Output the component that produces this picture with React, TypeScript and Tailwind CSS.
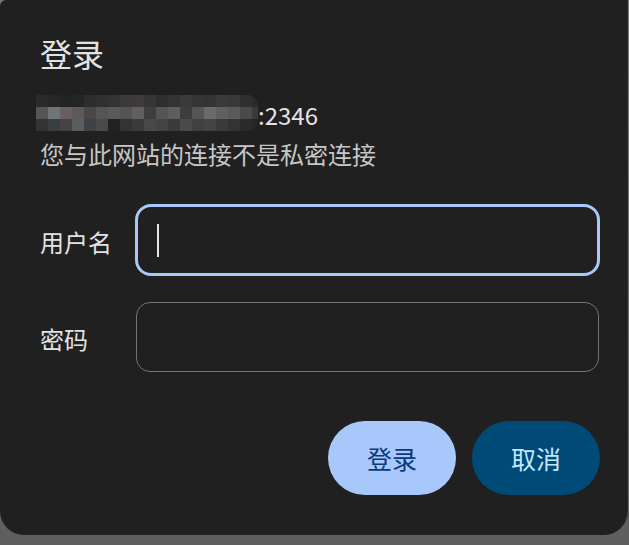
import React from "react";

const rows: string[][] = [
  ["#2a2a2a","#262626","#232323","#252525","#2d2d2d","#303030","#333333","#3a3a3a","#3d3a39","#363636","#2e2e2e","#333333","#3a3a3a","#353535","#333333","#3a3a3a","#383838","#2f2f2f","#2a2a2a"],
  ["#555555","#6f7575","#6a5e5e","#5a5a5a","#4a4746","#555555","#5a5a5a","#545454","#606060","#3e3e3e","#555555","#5e5e5e","#3d3d3d","#555555","#6a6a6a","#606060","#5a5a5a","#4a4a4a","#3a3a3a"],
  ["#333333","#3a3e40","#444444","#5a5e5e","#3e4246","#4a4a4a","#222222","#333333","#3a3a3a","#484848","#444444","#3a3a3a","#4a4a4a","#404040","#444444","#3a3a3a","#333333","#2a2a2a","#262626"],
];

function Mosaic() {
  return (
    <div className="flex flex-col w-[222px] overflow-hidden rounded-r-[10px] shrink-0">
      {rows.map((r, i) => (
        <div key={i} className="flex h-[12px]">
          {r.map((c, j) => (
            <div key={j} className="w-[12px] h-[12px] shrink-0" style={{ backgroundColor: c }} />
          ))}
        </div>
      ))}
    </div>
  );
}

export default function App() {
  const font = { fontFamily: '"Noto Sans CJK SC", "Noto Sans", sans-serif' };
  return (
    <div className="w-[629px] h-[545px] bg-gradient-to-b from-[#787878] to-[#5e5e5e]" style={font}>
      <div className="w-[628px] h-[535px] bg-[#202020] rounded-b-[24px] rounded-tl-[6px] border-r border-[#2c2c2c] pl-[40px] pr-[27px] pt-[37px] flex flex-col">
        <div className="text-[32px] leading-[32px] text-[#e3e3e3]">登录</div>
        <div className="mt-[26px] ml-[-4px] flex items-center h-[36px]">
          <Mosaic />
          <span className="text-[24px] leading-[24px] text-[#e3e3e3] mt-[4px]">:2346</span>
        </div>
        <div className="mt-[11px] text-[24px] leading-[24px] text-[#c7c7c7]">您与此网站的连接不是私密连接</div>
        <div className="mt-[38px] flex items-center">
          <div className="w-[95px] shrink-0 text-[24px] leading-[24px] text-[#e3e3e3] mt-[4px]">用户名</div>
          <div className="w-[465px] shrink-0 h-[72px] rounded-[16px] border-[3px] border-[#a8c7fa] flex items-center pl-[19px]">
            <div className="w-[2px] h-[33px] bg-[#e3e3e3]" />
          </div>
        </div>
        <div className="mt-[26px] flex items-center">
          <div className="w-[96px] shrink-0 text-[24px] leading-[24px] text-[#e3e3e3] mt-[4px]">密码</div>
          <div className="w-[463px] shrink-0 h-[70px] rounded-[14px] border border-[#757575]" />
        </div>
        <div className="mt-[49px] flex justify-end gap-[16px]">
          <button className="w-[128px] h-[74px] rounded-full bg-[#a8c7fa] text-[#0b3a7a] text-[25px] leading-[25px]">登录</button>
          <button className="w-[128px] h-[74px] rounded-full bg-[#004a77] text-[#c2e7ff] text-[25px] leading-[25px]">取消</button>
        </div>
      </div>
    </div>
  );
}
